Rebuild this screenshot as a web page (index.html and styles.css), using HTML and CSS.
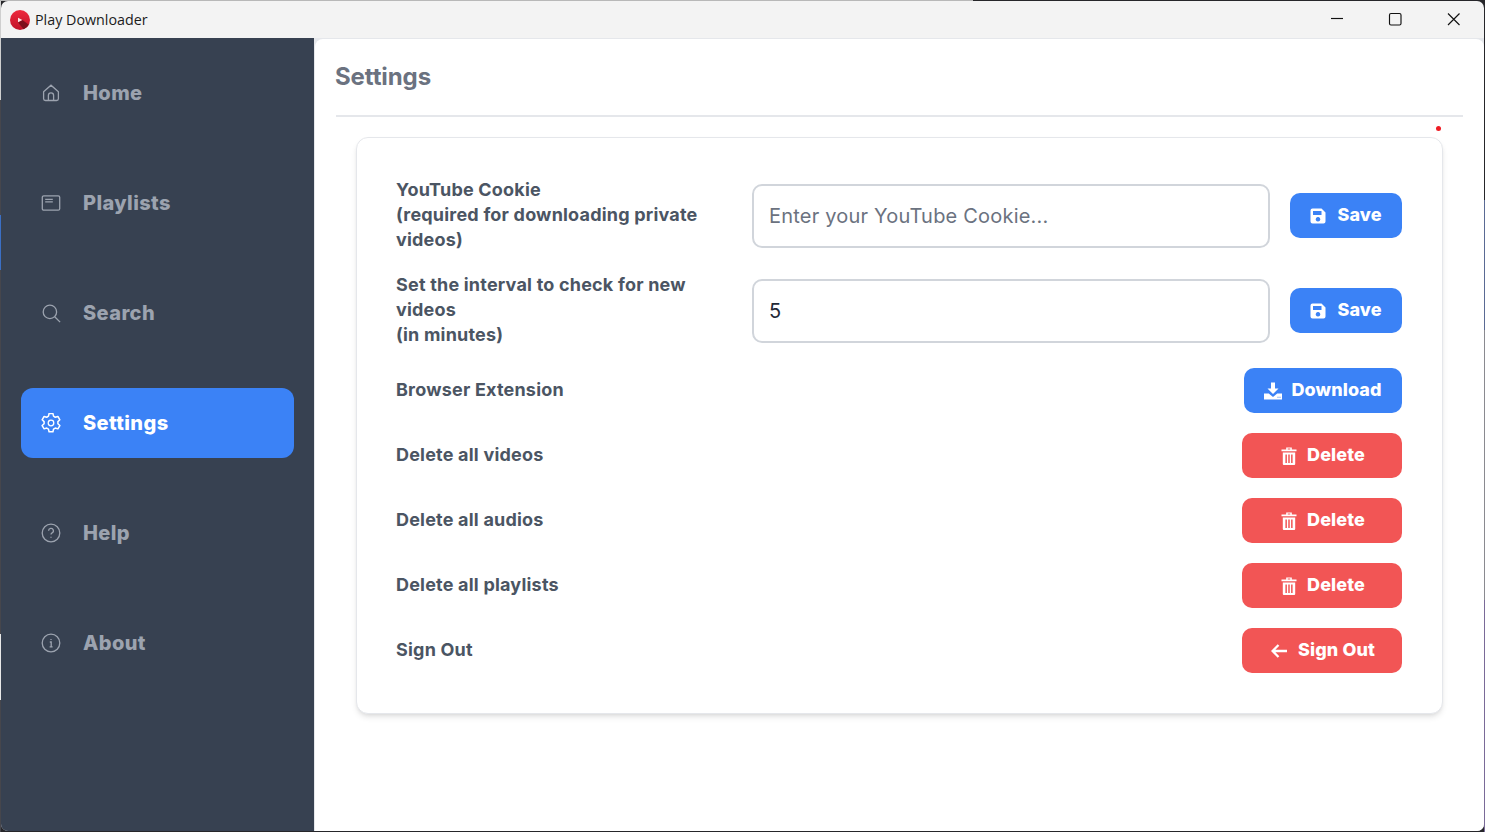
FILE: index.html
```html
<!DOCTYPE html>
<html lang="en">
<head>
<meta charset="utf-8">
<title>Play Downloader</title>
<link rel="stylesheet" href="styles.css">
</head>
<body>
<div class="window">
  <header class="titlebar">
    <div class="app-id">
      <svg class="logo" viewBox="0 0 20 20"><defs><linearGradient id="lg" x1="0" y1="0" x2="0" y2="1"><stop offset="0" stop-color="#ee2a3e"/><stop offset="1" stop-color="#c11228"/></linearGradient></defs><circle cx="10" cy="10" r="10" fill="url(#lg)"/><path d="M8 12.500 L12.500 10 L18.800 14.800 A10 10 0 0 1 13.600 19.300 Z" fill="#7e0f1c"/><path d="M8 7.700 L12.300 10 L8 12.300 Z" fill="#fbe9e9"/></svg>
      <span class="app-name">Play Downloader</span>
    </div>
    <div class="win-controls">
      <svg class="win-btn" viewBox="0 0 58 38"><path d="M23 18.500h12"/></svg>
      <svg class="win-btn" viewBox="0 0 58 38"><rect x="23.500" y="13.500" width="11.500" height="11.500" rx="1.500"/></svg>
      <svg class="win-btn" viewBox="0 0 58 38"><path d="M24 13.500l11.500 11.500M35.500 13.500l-11.500 11.500"/></svg>
    </div>
  </header>
  <div class="body">
    <nav class="sidebar">
      <a class="nav-item"><svg class="nav-icon" viewBox="0 0 20 20"><path d="M2.600 8.700 10 2.200l7.400 6.500v7a1.800 1.800 0 0 1-1.800 1.800H4.400a1.800 1.800 0 0 1-1.800-1.800z M7.400 17.500v-5a2.600 2.600 0 0 1 5.200 0v5"/></svg><span>Home</span></a>
      <a class="nav-item"><svg class="nav-icon" viewBox="0 0 20 20"><rect x="1.300" y="2.800" width="17.400" height="14.400" rx="1.500"/><path d="M4.200 6.300h7.600M4.200 8.800h7.600"/></svg><span>Playlists</span></a>
      <a class="nav-item"><svg class="nav-icon" viewBox="0 0 20 20"><circle cx="8.900" cy="8.900" r="6.700"/><path d="M13.700 13.700l5.400 5.400"/></svg><span>Search</span></a>
      <a class="nav-item active"><svg class="nav-icon" viewBox="0 0 20 20"><path transform="translate(10 10) scale(1.150) translate(-10 -10)" d="M8.300 1.800h3.400l.5 2.300 1.500.9 2.300-.7 1.700 2.900-1.700 1.600v1.800l1.700 1.600-1.700 2.900-2.300-.7-1.500.9-.5 2.300H8.300l-.5-2.300-1.500-.9-2.300.7-1.700-2.900 1.700-1.600V8.800L2.300 7.200 4 4.300l2.300.7 1.500-.9z" stroke-linejoin="round"/><circle cx="10" cy="10" r="2.800"/></svg><span>Settings</span></a>
      <a class="nav-item"><svg class="nav-icon" viewBox="0 0 20 20"><circle cx="10" cy="10" r="8.800"/><path d="M7.600 7.800a2.400 2.400 0 1 1 3.500 2.100c-.8.400-1.100.9-1.100 1.700"/><path d="M10 13.800v.9"/></svg><span>Help</span></a>
      <a class="nav-item"><svg class="nav-icon" viewBox="0 0 20 20"><circle cx="10" cy="10" r="8.800"/><path d="M8.800 9h1.400v4.600M8.600 13.800h3M10 6v.9"/></svg><span>About</span></a>
    </nav>
    <main class="main">
      <h1 class="page-title">Settings</h1>
      <hr class="rule">
      <section class="card">
        <span class="dot"></span>
        <div class="row">
          <label class="label">YouTube Cookie<br>(required for downloading private<br>videos)</label>
          <div class="field"><input class="input" type="text" placeholder="Enter your YouTube Cookie..."></div>
          <button class="btn blue"><svg class="btn-icon" viewBox="0 0 16 16"><use href="#save"/></svg>Save</button>
        </div>
        <div class="row">
          <label class="label">Set the interval to check for new<br>videos<br>(in minutes)</label>
          <div class="field"><input class="input" type="text" value="5"></div>
          <button class="btn blue"><svg class="btn-icon" viewBox="0 0 16 16"><use href="#save"/></svg>Save</button>
        </div>
        <div class="row">
          <label class="label">Browser Extension</label>
          <button class="btn blue dl"><svg class="btn-icon dl-icon" viewBox="0 0 18 18"><path fill-rule="evenodd" d="M7 .5h4v6h3.500L9 12 3.500 6.500H7z M0 11.500h4.800L9 15l4.200-3.500H18v6H0z M13.500 14.800v1h1v-1z M15.500 14.800v1h1v-1z"/></svg>Download</button>
        </div>
        <div class="row">
          <label class="label">Delete all videos</label>
          <button class="btn red del"><svg class="btn-icon trash" viewBox="0 0 16 18"><use href="#trash"/></svg>Delete</button>
        </div>
        <div class="row">
          <label class="label">Delete all audios</label>
          <button class="btn red del"><svg class="btn-icon trash" viewBox="0 0 16 18"><use href="#trash"/></svg>Delete</button>
        </div>
        <div class="row">
          <label class="label">Delete all playlists</label>
          <button class="btn red del"><svg class="btn-icon trash" viewBox="0 0 16 18"><use href="#trash"/></svg>Delete</button>
        </div>
        <div class="row">
          <label class="label">Sign Out</label>
          <button class="btn red del"><svg class="btn-icon arrow" viewBox="0 0 16 14"><path d="M7.500 1 1.600 7l5.900 6M2 7h14" fill="none" stroke="#fff" stroke-width="2.300"/></svg>Sign Out</button>
        </div>
      </section>
    </main>
  </div>
</div>
<svg class="defs" width="0" height="0">
  <symbol id="save" viewBox="0 0 16 16"><path fill-rule="evenodd" d="M2 .5h9.500L15.500 4.500V13.500a2 2 0 0 1-2 2H2.500A2 2 0 0 1 .5 13.500V2.500A2 2 0 0 1 2.500.5z M3 3v4h8.500V3z M8 9a2.300 2.300 0 1 0 .01 0z"/></symbol>
  <symbol id="trash" viewBox="0 0 16 18"><path fill-rule="evenodd" d="M.5 2.500h4.700V.5h5.600v2h4.700v1.800H.5z M6.700 1.600v.9h2.600v-.9z M1.800 5.500h12.400v11.500a1 1 0 0 1-1 1H2.800a1 1 0 0 1-1-1z M4.400 7.500v8.500h1.500V7.500z M7.250 7.500v8.500h1.500V7.500z M10.100 7.500v8.500h1.500V7.500z"/></symbol>
</svg>
</body>
</html>
```
FILE: styles.css
```css
* { box-sizing: border-box; }
html, body { margin: 0; height: 100%; }
body {
  overflow: hidden;
  font-family: Inter, "Liberation Sans", sans-serif;
  background:
    linear-gradient(90deg, #b8b8b8 973px, #26262a 973px) top left / 100% 1px no-repeat,
    linear-gradient(180deg, #cfcfcf 100px, #46464c 100px, #46464c 215px, #3b6fc4 215px, #3b6fc4 270px, #46464c 270px, #46464c 634px, #e8e8e8 634px, #e8e8e8 700px, #46464c 700px) top left / 1px 100% no-repeat,
    linear-gradient(180deg, #26262a 200px, #5a6a94 200px, #5a6a94 330px, #8a8a90 330px, #8a8a90 600px, #7a6a98 600px) top right / 1px 100% no-repeat,
    #26262a;
}
.window { height: 832px; padding: 1px 1px 1px 1px; }
.titlebar { height: 37px; background: #f3f3f3; display: flex; justify-content: space-between; align-items: center; border-radius: 7px 7px 0 0; }
.app-id { display: flex; align-items: center; padding-left: 9px; }
.logo { width: 20px; height: 20px; }
.app-name { font-family: "Open Sans", sans-serif; font-size: 14.300px; color: #1b1b1b; margin-left: 5px; }
.win-controls { display: flex; margin-right: 2px; align-self: flex-start; margin-top: -1px; }
.win-btn { width: 58px; height: 38px; display: block; fill: none; stroke: #111; stroke-width: 1.150; }
.body { display: flex; height: 793px; background: #e5e7eb; border-radius: 0 0 7px 7px; overflow: hidden; }
.sidebar { width: 313px; background: #374151; padding: 20px 20px 0; display: flex; flex-direction: column; gap: 40px; flex: none; }
.nav-item { height: 70px; border-radius: 12px; display: flex; align-items: center; padding-left: 20px; color: #9ca3af; font-weight: 800; font-size: 20px; letter-spacing: .4px; }
.nav-item.active { background: #3b82f6; color: #fff; }
.nav-icon { width: 20px; height: 20px; margin-right: 22px; fill: none; stroke: currentColor; stroke-width: 1.300; }
.main { flex: 1; background: #fff; margin: 1px 0 0 1px; border-radius: 8px 8px 0 0; padding: 0 21px 0 21px; }
.page-title { margin: 0 0 0 -1px; font-size: 24px; line-height: 32px; font-weight: 700; color: #6b7280; padding-top: 22px; height: 76px; letter-spacing: -.1px; }
.rule { margin: 0; border: 0; height: 2px; background: #e5e7eb; }
.card { position: relative; margin: 20px 20px 0; height: 577px; background: #fff; border: 1px solid #e5e7eb; border-radius: 12px; padding: 40px; display: flex; flex-direction: column; gap: 20px; box-shadow: 0 4px 6px -1px rgba(0,0,0,.1), 0 2px 4px -2px rgba(0,0,0,.1); }
.dot { position: absolute; width: 5px; height: 5px; background: #ef1c24; border-radius: 50%; top: -12px; right: 1px; }
.row { display: flex; align-items: center; gap: 20px; }
.label { flex: none; width: 336px; margin: -1px 0 1px -1px; font-size: 18px; line-height: 25px; font-weight: 700; color: #4b5563; white-space: nowrap; letter-spacing: .2px; }
.field { flex: 1; }
.input { width: 100%; height: 64px; border: 2px solid #d1d5db; border-radius: 10px; padding: 0 15px; font-family: Inter, sans-serif; font-size: 20px; letter-spacing: .2px; color: #1f2937; outline: none; background: #fff; }
.input::placeholder { color: #6b7280; opacity: 1; }
.btn { height: 45px; border: 0; border-radius: 10px; display: flex; align-items: center; justify-content: center; color: #fff; font-family: Inter, sans-serif; font-size: 18px; font-weight: 800; padding: 0 0 2px; flex: none; width: 112px; letter-spacing: .1px; }
.blue { background: #3b82f6; }
.red { background: #f25555; }
.dl { width: 158px; margin-left: auto; }
.del { width: 160px; margin-left: auto; padding-left: 2px; }
.btn-icon { width: 16px; height: 16px; fill: #fff; margin: 2px 11px 0 0; }
.dl-icon { width: 18px; height: 18px; margin-right: 9px; }
.trash { width: 16px; height: 18px; margin-right: 10px; }
.arrow { width: 16px; height: 14px; }
.defs { position: absolute; }
```
